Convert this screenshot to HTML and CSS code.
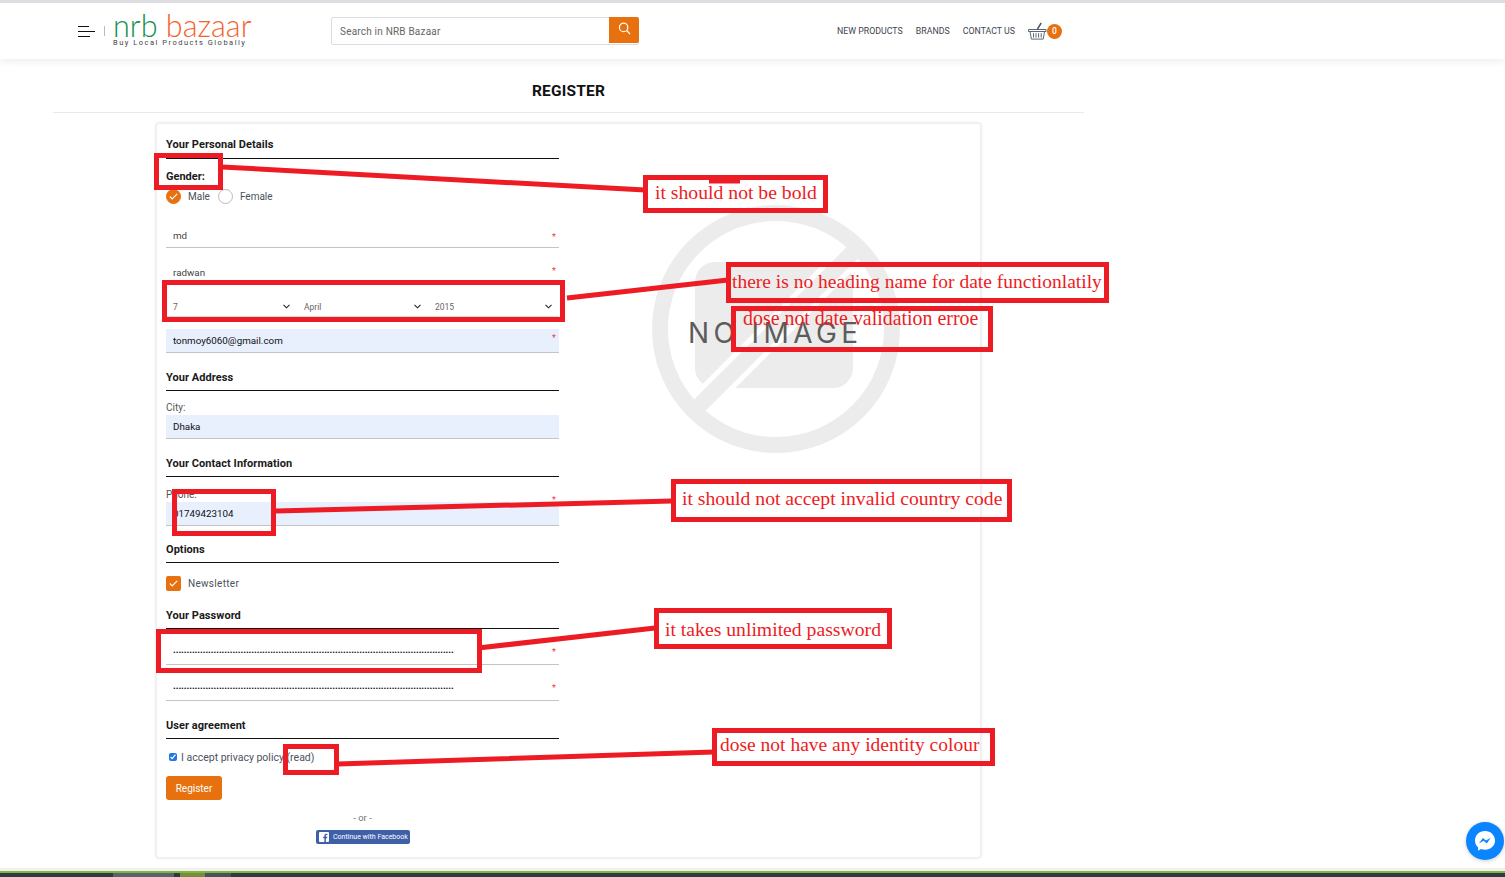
FILE: index.html
```html
<!DOCTYPE html>
<html lang="en">
<head>
  <meta charset="UTF-8">
  <title>Register - NRB Bazaar</title>
  <link rel="stylesheet" href="styles.css">
</head>
<body>

<header class="topbar">
  <div class="topbar-inner">
    <div class="burger"><span></span><span></span><span></span></div>
    <div class="burger-sep"></div>
    <a class="logo" href="#">
      <div class="logo-name"><span class="logo-green">nrb</span> <span class="logo-orange">bazaar</span></div>
      <div class="logo-tag">Buy Local Products Globally</div>
    </a>
    <form class="search">
      <input type="text" placeholder="Search in NRB Bazaar">
      <button type="button" aria-label="Search">
        <svg width="13" height="13" viewBox="0 0 13 13" fill="none" stroke="#fff" stroke-width="1.2"><circle cx="5.6" cy="5.4" r="4.2"/><path d="M8.7 8.5l3.4 3.6"/></svg>
      </button>
    </form>
    <nav class="nav">
      <a href="#">NEW PRODUCTS</a>
      <a href="#">BRANDS</a>
      <a href="#">CONTACT US</a>
    </nav>
    <div class="cart">
      <svg width="19" height="18" viewBox="0 0 19 18" fill="none" stroke="#4a5568" stroke-width="0.9"><path d="M.5 7.500h17.600v2H.5zM2 9.500l1.400 7.600h11.800l1.400-7.600M5.500 11.200v4.400M8 11.200v4.400M10.600 11.200v4.400M13.200 11.200v4.400"/><path d="M9.400 7.200L13.200 1" stroke-width="1.5"/></svg>
      <span class="cart-count">0</span>
    </div>
  </div>
</header>

<main class="page">
  <h1 class="page-title">REGISTER</h1>

  <div class="card">
    <svg class="no-image" width="250" height="250" viewBox="0 0 250 250">
      <path d="M44 78a20 20 0 0 1 20-20h118a20 20 0 0 1 20 20v86a20 20 0 0 1-20 20H64a20 20 0 0 1-20-20z" fill="#ececec"/>
      <path d="M49 201L201 49" stroke="#fff" stroke-width="26"/>
      <circle cx="125" cy="125" r="116" fill="none" stroke="#ececec" stroke-width="16"/>
      <path d="M42 208L208 42" stroke="#ececec" stroke-width="16"/>
    </svg>
    <div class="no-image-text">NO IMAGE</div>

    <form class="form">
      <h3 class="legend first">Your Personal Details</h3>
      <div class="gender-label">Gender:</div>
      <div class="radios">
        <span class="radio on"><svg width="9" height="7" viewBox="0 0 9 7" fill="none" stroke="#fff" stroke-width="1.1"><path d="M.8 3.500l2.400 2.400L8.200.9"/></svg></span>
        <span class="radio-text">Male</span>
        <span class="radio"></span>
        <span class="radio-text">Female</span>
      </div>

      <div class="field first-name"><input type="text" value="md"><i class="req">*</i></div>
      <div class="field last-name"><input type="text" value="radwan"><i class="req">*</i></div>

      <div class="dob">
        <div class="dob-part"><select><option>7</option></select><svg class="chev" width="7" height="5" viewBox="0 0 7 5" fill="none" stroke="#222" stroke-width="1.1"><path d="M.5.8l3 3 3-3"/></svg></div>
        <div class="dob-part"><select><option>April</option></select><svg class="chev" width="7" height="5" viewBox="0 0 7 5" fill="none" stroke="#222" stroke-width="1.1"><path d="M.5.8l3 3 3-3"/></svg></div>
        <div class="dob-part"><select><option>2015</option></select><svg class="chev" width="7" height="5" viewBox="0 0 7 5" fill="none" stroke="#222" stroke-width="1.1"><path d="M.5.8l3 3 3-3"/></svg></div>
      </div>

      <div class="field filled email"><input type="text" value="tonmoy6060@gmail.com"><i class="req">*</i></div>

      <h3 class="legend">Your Address</h3>
      <label class="small-label city-label">City:</label>
      <div class="field filled short"><input type="text" value="Dhaka"></div>

      <h3 class="legend">Your Contact Information</h3>
      <label class="small-label phone-label">Phone:</label>
      <div class="field filled short phone"><input type="text" value="01749423104"><i class="req">*</i></div>

      <h3 class="legend legend-options">Options</h3>
      <div class="newsletter">
        <span class="check"><svg width="9" height="7" viewBox="0 0 9 7" fill="none" stroke="#fff" stroke-width="1.1"><path d="M.8 3.500l2.400 2.400L8.200.9"/></svg></span>
        <span class="radio-text news-text">Newsletter</span>
      </div>

      <h3 class="legend">Your Password</h3>
      <div class="field pass-one"><input type="password" value="aaaaaaaaaaaaaaaaaaaaaaaaaaaaaaaaaaaaaaaaaaaaaaaaaaaaaaaaaaaaaaaaaaaaaaaaaaaaaaaaaaaaaaaaaaaaaaaaaaaaaaaa"><i class="req">*</i></div>
      <div class="field pass-two"><input type="password" value="aaaaaaaaaaaaaaaaaaaaaaaaaaaaaaaaaaaaaaaaaaaaaaaaaaaaaaaaaaaaaaaaaaaaaaaaaaaaaaaaaaaaaaaaaaaaaaaaaaaaaaaa"><i class="req">*</i></div>

      <h3 class="legend">User agreement</h3>
      <label class="agree"><input type="checkbox" checked> I accept privacy policy (read)</label>
      <button type="button" class="btn-register">Register</button>
      <div class="or">- or -</div>
      <a class="btn-fb" href="#">
        <svg width="10" height="10" viewBox="0 0 10 10"><rect width="10" height="10" rx="1" fill="#fff"/><path d="M6.900 10V6.200h1.200l.2-1.500H6.900v-.9c0-.4.1-.7.7-.7h.8V1.800c-.2 0-.6-.1-1.100-.1-1.100 0-1.900.7-1.900 1.900v1.100H4.200v1.500h1.200V10z" fill="#3f5fa8"/></svg>
        Continue with Facebook
      </a>
    </form>
  </div>
</main>

<footer class="footer">
  <div class="footer-bar">
    <span class="fb-a"></span><span class="fb-b"></span><span class="fb-c"></span>
  </div>
</footer>

<a class="messenger" href="#" aria-label="Messenger">
  <svg width="22" height="22" viewBox="0 0 22 22"><path d="M11 1C5.300 1 1 5.100 1 10.500c0 2.900 1.200 5.300 3.100 7v3.200l3-1.600c1.200.4 2.500.6 3.900.6 5.700 0 10-4.100 10-9.300S16.700 1 11 1z" fill="#fff"/><path d="M4.900 13.500l4-5.600 3.100 2.600 4.700-2.800-3.900 5.700-3.200-2.600z" fill="#0a84ff"/></svg>
</a>

<!-- review markup drawn on top of the screenshot -->
<svg class="markup" width="1505" height="877" viewBox="0 0 1505 877" fill="none" stroke="#ed1c24">
  <g stroke-width="5">
    <rect x="156.500" y="155.500" width="64" height="32"/>
    <rect x="164.500" y="282.500" width="398" height="37"/>
    <rect x="174.500" y="491.500" width="99" height="42"/>
    <rect x="158.500" y="631.500" width="321" height="39"/>
    <rect x="285.500" y="746.500" width="51" height="26"/>
    <rect x="645.500" y="177.500" width="180" height="33"/>
    <rect x="728.500" y="264.500" width="378" height="36"/>
    <rect x="733.500" y="308.500" width="257" height="41"/>
    <rect x="673.500" y="481.500" width="336" height="38"/>
    <rect x="656.500" y="610.500" width="233" height="36"/>
    <rect x="714.500" y="730.500" width="278" height="33"/>
    <path d="M222 167L645 190M567 298L728 280M276 511L672 501M478 648L655 628M338 764L714 752"/>
    <path d="M709 181h31"/>
  </g>
</svg>
<div class="note note-bold">it should not be bold</div>
<div class="note note-heading">there is no heading name for date functionlatily</div>
<div class="note note-date">dose not date validation erroe</div>
<div class="note note-phone">it should not accept invalid country code</div>
<div class="note note-pass">it takes unlimited password</div>
<div class="note note-colour">dose not have any identity colour</div>

</body>
</html>
```

FILE: styles.css
```css
* { box-sizing: border-box; }
html, body { height: 100%; }
body { margin: 0; background-color: #fff; font-family: Roboto, Arial, sans-serif; color: #333; overflow: hidden; position: relative; }
a { text-decoration: none; color: inherit; }
input, select, button { font-family: inherit; }

/* header */
.topbar { height: 59px; border-top: 3px solid #dcdce1; background-color: #fff; box-shadow: 0 2px 8px rgba(0, 0, 0, 0.08); }
.topbar-inner { display: flex; align-items: center; height: 56px; padding-left: 78px; }
.burger { width: 17px; display: flex; flex-direction: column; gap: 4px; }
.burger span { display: block; height: 1px; background-color: #111; }
.burger span:nth-child(1) { width: 11px; }
.burger span:nth-child(3) { width: 12px; }
.burger-sep { width: 1px; height: 10px; background-color: #bbb; margin-left: 9px; margin-right: 8px; }
.logo { display: block; width: 218px; padding-bottom: 2px; }
.logo-name { font-family: Lato, sans-serif; font-weight: 300; font-size: 30.600px; line-height: 24px; white-space: nowrap; }
.logo-green { color: #14904c; }
.logo-orange { color: #f4622d; }
.logo-tag { font-size: 7.500px; line-height: 9px; letter-spacing: 1.500px; color: #444; white-space: nowrap; }
.search { display: flex; width: 308px; height: 28px; border: 1px solid #dcdce1; border-radius: 2px; }
.search input { flex: 1; min-width: 0; border: none; outline: none; padding: 0 8px; font-size: 10px; letter-spacing: 0.2px; background: transparent; }
.search input::placeholder { color: #666; }
.search button { width: 30px; height: 26px; border: none; padding: 0; background-color: #e8710f; border-radius: 0 2px 2px 0; margin: -1px -1px 0 0; }
.nav { display: flex; gap: 13px; margin-left: 198px; font-size: 8.800px; color: #3d4550; }
.cart { display: flex; align-items: center; margin-left: 13px; }
.cart-count { width: 15px; height: 15px; border-radius: 50%; background-color: #e8710f; color: #fff; font-size: 8.500px; font-weight: 500; text-align: center; line-height: 15px; }

/* page */
.page { width: 1031px; margin-left: 53px; }
.page-title { margin: 0; height: 54px; border-bottom: 1px solid #e8e8ee; padding-top: 24px; text-align: center; font-size: 15.500px; line-height: 17px; font-weight: 700; letter-spacing: 0.2px; color: #111; }
.card { position: relative; width: 825px; height: 735px; margin: 10px 0 0 103px; padding: 0 0 0 9px; border: 1px solid #efefef; border-radius: 3px; box-shadow: 0 0 3px rgba(0, 0, 0, 0.15); background-color: #fff; }
.no-image { position: absolute; left: 494px; top: 80px; }
.no-image-text { position: absolute; left: 531px; top: 192px; font-family: Inter, sans-serif; font-size: 28px; line-height: 34px; letter-spacing: 4.400px; color: #5c5c5c; white-space: nowrap; }
.form { position: relative; width: 393px; }

.legend { margin: 18px 0 0; height: 20px; border-bottom: 1px solid #111; font-size: 11px; line-height: 13px; font-weight: 700; letter-spacing: 0.05px; color: #1a1a1a; }
.legend.first { margin-top: 14px; height: 21px; }
.legend-options { margin-top: 17px; }
.gender-label { margin-top: 11px; font-size: 11px; line-height: 13px; font-weight: 700; color: #1a1a1a; }
.radios { display: flex; align-items: center; margin-top: 5px; height: 16px; }
.radio { display: flex; align-items: center; justify-content: center; width: 15px; height: 15px; border: 1px solid #bbb; border-radius: 50%; }
.radio.on { background-color: #e8710f; border-color: #e8710f; }
.radio-text { margin: 0 8px 0 7px; font-size: 10px; color: #4a5260; }
.news-text { letter-spacing: 0.3px; }

.field { position: relative; border-bottom: 1px solid #c4c4c4; }
.field input { display: block; width: 100%; height: 100%; border: none; outline: none; background: transparent; padding: 0 7px; font-size: 9.800px; color: #444; }
.first-name { margin-top: 15px; height: 29px; }
.last-name { margin-top: 7px; height: 30px; border-bottom: none; }
.first-name input { padding-top: 5px; }
.last-name input { padding-top: 5px; }
.filled { background-color: #e8f0fe; }
.filled input { color: #111; }
.email { margin-top: 12px; height: 24px; }
.short { height: 24px; }
.req { position: absolute; right: 3px; top: 50%; margin-top: -8px; font-style: normal; font-size: 9px; color: #f04040; }
.first-name .req { top: 21px; }
.last-name .req { top: 19px; }
.pass-one .req, .pass-two .req { top: 26px; }
.phone .req { top: 1px; }

.dob { display: flex; height: 32px; border-bottom: 1px solid #ddd; }
.dob-part { position: relative; flex: 1; }
.dob select { width: 100%; height: 100%; appearance: none; border: none; outline: none; background: transparent; padding: 12px 7px 0; font-size: 8.500px; color: #666; }
.chev { position: absolute; right: 7px; top: 19px; }

.small-label { display: block; font-size: 10px; line-height: 12px; color: #555; margin-bottom: 1px; }
.city-label { margin-top: 11px; }
.phone-label { margin-top: 12px; }

.newsletter { display: flex; align-items: center; margin-top: 13px; height: 15px; }
.check { display: flex; align-items: center; justify-content: center; width: 15px; height: 15px; border-radius: 2px; background-color: #e8710f; }

.pass-one { height: 36px; }
.pass-two { height: 36px; }
.pass-one input, .pass-two input { padding-top: 11px; padding-right: 30px; font-size: 8px; color: #111; }

.agree { display: flex; align-items: center; gap: 4px; margin: 11px 0 0 3px; height: 14px; font-size: 10.500px; color: #4a5260; }
.agree input { width: 8px; height: 8px; margin: 0; accent-color: #1e78e6; }
.btn-register { display: block; margin-top: 12px; width: 56px; height: 24px; border: none; border-radius: 3px; background-color: #e8710f; color: #fff; font-size: 10px; }
.or { margin-top: 12px; text-align: center; font-size: 9.500px; line-height: 12px; color: #777; }
.btn-fb { display: flex; align-items: center; gap: 4px; width: 94px; height: 14px; margin: 6px 0 0 150px; padding-left: 3px; border-radius: 2px; background-color: #3f5fa8; color: #fff; font-size: 7px; white-space: nowrap; }

/* footer */
.footer { position: absolute; left: 0; right: 0; bottom: 0; height: 9px; border-top: 3px solid #f1f1f4; }
.footer-bar { display: flex; height: 6px; border-top: 2px solid #7cb83c; background-color: #2d3a40; padding-left: 113px; }
.footer-bar span { display: block; }
.fb-a { width: 61px; background-color: #59636a; margin-right: 6px; }
.fb-b { width: 25px; background-color: #7d8a3c; }
.fb-c { width: 26px; background-color: #47535a; }

.messenger { position: absolute; left: 1466px; top: 822px; width: 38px; height: 38px; border-radius: 50%; background-color: #0a84ff; display: flex; align-items: center; justify-content: center; box-shadow: 0 1px 4px rgba(0, 0, 0, 0.2); }

/* annotations */
.markup { position: absolute; left: 0; top: 0; pointer-events: none; }
.note { position: absolute; font-family: "Liberation Serif", serif; font-size: 19.700px; line-height: 24px; color: #ed1c24; white-space: nowrap; }
.note-bold { left: 655px; top: 180px; }
.note-heading { left: 732px; top: 270px; font-size: 19.500px; }
.note-date { left: 743px; top: 306px; font-size: 19.900px; }
.note-phone { left: 682px; top: 486px; }
.note-pass { left: 665px; top: 617px; }
.note-colour { left: 720px; top: 733px; font-size: 19.500px; }
```
